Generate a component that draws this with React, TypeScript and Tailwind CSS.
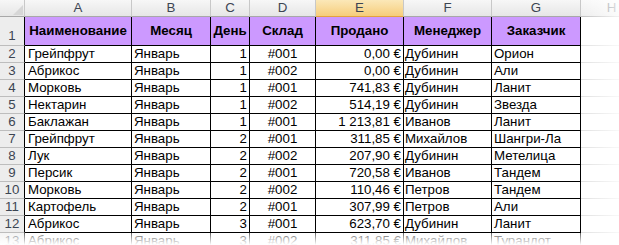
import React from "react";

type Col = { w: string; align: string };

const cols: Col[] = [
  { w: "w-[107px]", align: "justify-start pl-[3px]" },
  { w: "w-[79px]", align: "justify-start pl-[2px]" },
  { w: "w-[39px]", align: "justify-end pr-[2px]" },
  { w: "w-[66px]", align: "justify-center" },
  { w: "w-[88px]", align: "justify-end pr-[2px]" },
  { w: "w-[88px]", align: "justify-start pl-[1px]" },
  { w: "w-[89px]", align: "justify-start pl-[2px]" },
];

const headers = ["Наименование", "Месяц", "День", "Склад", "Продано", "Менеджер", "Заказчик"];
const letters = ["A", "B", "C", "D", "E", "F", "G"];

const rows: string[][] = [
  ["Грейпфрут", "Январь", "1", "#001", "0,00 €", "Дубинин", "Орион"],
  ["Абрикос", "Январь", "1", "#002", "0,00 €", "Дубинин", "Али"],
  ["Морковь", "Январь", "1", "#001", "741,83 €", "Дубинин", "Ланит"],
  ["Нектарин", "Январь", "1", "#002", "514,19 €", "Дубинин", "Звезда"],
  ["Баклажан", "Январь", "1", "#001", "1 213,81 €", "Иванов", "Ланит"],
  ["Грейпфрут", "Январь", "2", "#001", "311,85 €", "Михайлов", "Шангри-Ла"],
  ["Лук", "Январь", "2", "#002", "207,90 €", "Дубинин", "Метелица"],
  ["Персик", "Январь", "2", "#001", "720,58 €", "Иванов", "Тандем"],
  ["Морковь", "Январь", "2", "#002", "110,46 €", "Петров", "Тандем"],
  ["Картофель", "Январь", "2", "#001", "307,99 €", "Петров", "Али"],
  ["Абрикос", "Январь", "3", "#001", "623,70 €", "Дубинин", "Ланит"],
  ["Абрикос", "Январь", "3", "#002", "311,85 €", "Михайлов", "Турандот"],
];

function ColHeader({ w, label, selected }: { w: string; label: string; selected?: boolean }) {
  return (
    <div
      className={
        selected
          ? `${w} shrink-0 h-full flex items-center justify-center border-r border-b border-r-[#c8c8c8] border-b-[#e3a33f] bg-gradient-to-b from-[#fbe8b8] to-[#f6cd7a] text-[#3c4552]`
          : `${w} shrink-0 h-full flex items-center justify-center border-r border-b border-r-[#c8c8c8] border-b-[#a8a8a8] bg-gradient-to-b from-[#f7f7f7] to-[#e6e6e6] text-[#3c4552]`
      }
    >
      {label}
    </div>
  );
}

export default function App() {
  return (
    <div className="relative w-[619px] h-[245px] overflow-hidden bg-white font-['Liberation_Sans',Arial,sans-serif] text-[13.3px] text-black">
      {/* column header row */}
      <div className="flex h-[17px] leading-[16px]">
        <div className="relative w-[25px] shrink-0 h-full border-r border-b border-r-[#c8c8c8] border-b-[#a8a8a8] bg-gradient-to-b from-[#f7f7f7] to-[#e6e6e6]">
          <svg className="absolute right-[1px] bottom-[1px]" width="10" height="10" viewBox="0 0 10 10">
            <polygon points="10,0 10,10 0,10" fill="#d6d6d6" />
          </svg>
        </div>
        {cols.map((c, i) => (
          <ColHeader key={letters[i]} w={c.w} label={letters[i]} selected={i === 4} />
        ))}
        <ColHeader w="w-[62px]" label="H" />
      </div>

      {/* row 1: headers */}
      <div className="flex h-[29px]">
        <div className="w-[25px] shrink-0 h-full flex items-end justify-center pb-[1px] border-r border-b border-r-black border-b-[#bdbdbd] bg-[#ededed] text-[#3c4552] leading-[16px]">
          1
        </div>
        {cols.map((c, i) => (
          <div
            key={i}
            className={`${c.w} shrink-0 h-full flex items-center justify-center border-r border-b border-black bg-[#cc99ff] font-bold whitespace-nowrap overflow-hidden`}
          >
            {headers[i]}
          </div>
        ))}
        <div className="w-[62px] shrink-0 h-full border-b border-[#d4d4d4]" />
      </div>

      {/* data rows */}
      {rows.map((r, ri) => (
        <div key={ri} className="flex h-[17px] leading-[16px]">
          <div className="w-[25px] shrink-0 h-full flex items-center justify-center border-r border-b border-r-black border-b-[#bdbdbd] bg-[#ededed] text-[#3c4552]">
            {ri + 2}
          </div>
          {cols.map((c, i) => (
            <div
              key={i}
              className={`${c.w} ${c.align} shrink-0 h-full flex items-center border-r border-b border-black whitespace-nowrap overflow-hidden`}
            >
              {r[i]}
            </div>
          ))}
          <div className="w-[62px] shrink-0 h-full border-b border-[#d4d4d4]" />
        </div>
      ))}

      {/* fade overlays */}
      <div className="absolute top-0 bottom-0 left-[581px] right-0 bg-gradient-to-r from-white/30 to-white/85" />
      <div className="absolute left-0 right-0 top-[233px] bottom-0 bg-gradient-to-b from-white/40 to-white" />
    </div>
  );
}
